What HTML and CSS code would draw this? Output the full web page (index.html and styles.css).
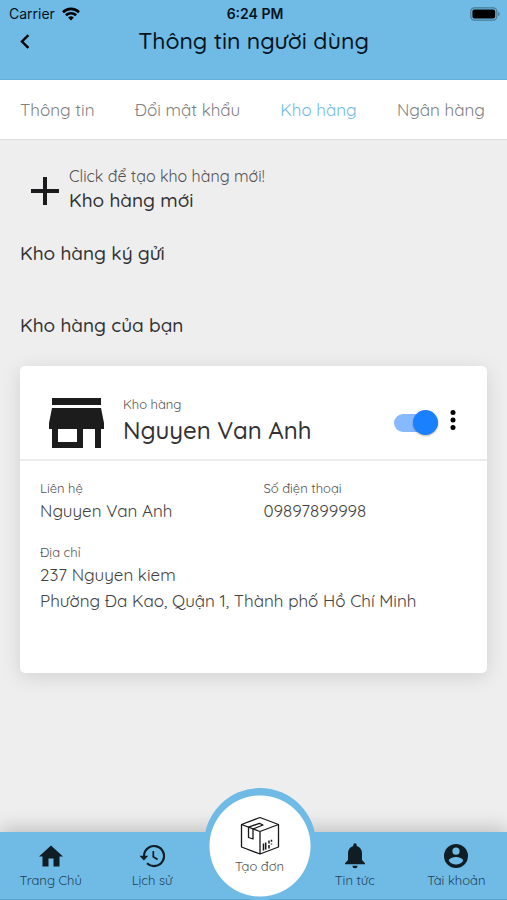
FILE: index.html
```html
<!DOCTYPE html>
<html lang="vi">
<head>
<meta charset="utf-8">
<meta name="viewport" content="width=device-width, initial-scale=1">
<title>Thông tin người dùng</title>
<link rel="stylesheet" href="styles.css">
</head>
<body>
<header class="header">
  <div class="status">
    <div class="status-carrier">
      <span>Carrier</span>
      <svg width="18" height="14" viewBox="0 0 18 14" aria-hidden="true"><g fill="none" stroke="#000" stroke-width="2.6"><path d="M1 5.2a11.4 11.4 0 0 1 16 0"/><path d="M3.9 8.3a7.3 7.3 0 0 1 10.2 0"/></g><path d="M6.1 10.6a4.2 4.2 0 0 1 5.8 0L9 13.6z"/></svg>
    </div>
    <div class="status-time">6:24 PM</div>
    <svg class="battery" width="31" height="14" viewBox="0 0 31 14" aria-hidden="true"><rect x=".8" y=".8" width="26" height="12.4" rx="3.6" fill="none" stroke="#477a96" stroke-width="1.2"/><rect x="2.4" y="2.4" width="22.8" height="9.2" rx="2"/><path d="M28.2 4.8c2 .8 2 3.6 0 4.4z" fill="#477a96"/></svg>
  </div>
  <div class="title-bar">
    <button class="back" type="button" aria-label="Quay lại"><svg width="10" height="15" viewBox="0 0 10 15"><path d="M8.4 1.2 2 7.5l6.4 6.3" fill="none" stroke="#000" stroke-width="2.4"/></svg></button>
    <h1>Thông tin người dùng</h1>
  </div>
</header>
<nav class="tabs">
  <a href="#info">Thông tin</a>
  <a href="#password">Đổi mật khẩu</a>
  <a class="active" href="#stores" aria-current="page">Kho hàng</a>
  <a href="#bank">Ngân hàng</a>
</nav>
<main class="content">
  <button class="create" type="button">
    <svg class="plus" width="30" height="30" viewBox="0 0 30 30" aria-hidden="true"><path d="M15 1v28M1 15h28" fill="none" stroke="#1b1b1d" stroke-width="4"/></svg>
    <span class="create-text">
      <span class="hint">Click để tạo kho hàng mới!</span>
      <span class="create-name">Kho hàng mới</span>
    </span>
  </button>
  <h2>Kho hàng ký gửi</h2>
  <h2>Kho hàng của bạn</h2>
  <article class="card">
    <div class="card-head">
      <svg class="store" width="56" height="50" viewBox="0 0 56 50" aria-hidden="true"><path fill="#1c1c1c" d="M3 0h49v7H3zM3 10h49l3 15v6h-3v19h-6V31H34v19H3V31H0v-6zM9 31v13h19V31z" fill-rule="evenodd"/></svg>
      <div class="card-title">
        <span class="label">Kho hàng</span>
        <h3>Nguyen Van Anh</h3>
      </div>
      <input class="switch" type="checkbox" role="switch" aria-label="Kích hoạt kho hàng" checked>
      <button class="more" type="button" aria-label="Tùy chọn"><svg width="6" height="22" viewBox="0 0 6 22"><circle cx="3" cy="3.500" r="2.500"/><circle cx="3" cy="11" r="2.500"/><circle cx="3" cy="18.500" r="2.500"/></svg></button>
    </div>
    <dl class="details">
      <div>
        <dt>Liên hệ</dt>
        <dd>Nguyen Van Anh</dd>
      </div>
      <div>
        <dt>Số điện thoại</dt>
        <dd>09897899998</dd>
      </div>
      <div class="wide">
        <dt>Địa chỉ</dt>
        <dd>237 Nguyen kiem</dd>
        <dd>Phường Đa Kao, Quận 1, Thành phố Hồ Chí Minh</dd>
      </div>
    </dl>
  </article>
</main>
<nav class="bottom">
  <a href="#home"><svg width="26" height="24" viewBox="0 0 26 24"><path fill="#101d24" d="M10.500 22.500v-8h5v8h6V12.500H25L13 1.500 1 12.500h3.500v10z"/></svg>Trang Chủ</a>
  <a href="#history"><svg width="26" height="24" viewBox="0 0 26 24"><path d="M5 12.500V12A10 10 0 1 1 8 19.200" fill="none" stroke="#101d24" stroke-width="2.200"/><path d="M.5 11.800h8.800l-4.400 4.700z" fill="#101d24"/><path d="M14.300 7v5.800l4.300 2.600" fill="none" stroke="#101d24" stroke-width="1.700"/></svg>Lịch sử</a>
  <a class="order" href="#create"><svg width="40" height="40" viewBox="0 0 40 40"><g fill="none" stroke="#171717" stroke-width="1.300" stroke-linejoin="round"><path d="M1.500 8.500 20 1.500l18.500 7V31L20 38 1.500 31zM1.500 8.500 20 15.500l18.500-7M20 15.500V38"/><path d="M8.500 11.200 19.500 7.300l3.500 1.700-10 4v10l-4.500-1.500z"/></g><path d="M23.500 27.500v7M25.700 26.500v7M29 24.500v3M29 29v3.500M31.500 23.800v2M31.500 27.500v1" stroke="#171717" stroke-width="1.500"/></svg>Tạo đơn</a>
  <a href="#news"><svg width="24" height="26" viewBox="0 0 24 26"><path fill="#101d24" d="M10.300 3V2a1.700 1.700 0 0 1 3.400 0v1c3.500.9 5.300 3.700 5.300 7.300V17l3 3.300v1H2v-1L5 17v-6.700C5 6.700 6.800 3.900 10.300 3zM9.500 22.700h5a2.500 2.500 0 0 1-5 0z"/></svg>Tin tức</a>
  <a href="#account"><svg width="24" height="24" viewBox="0 0 24 24"><path fill="#101d24" fill-rule="evenodd" d="M12 0a12 12 0 1 0 0 24 12 12 0 0 0 0-24zm0 3.600a3.600 3.600 0 1 1 0 7.200 3.600 3.600 0 0 1 0-7.200zm0 17a8.600 8.600 0 0 1-7.200-3.800c.1-2.400 4.800-3.700 7.200-3.700s7.100 1.300 7.200 3.700A8.600 8.600 0 0 1 12 20.600z"/></svg>Tài khoản</a>
</nav>
</body>
</html>
```
FILE: styles.css
```css
* { box-sizing: border-box; }

body {
  margin: 0;
  min-height: 100vh;
  display: flex;
  flex-direction: column;
  background: #eeeeee;
  color: #323234;
  font-family: Quicksand, Lato, sans-serif;
  font-size: 17px;
  line-height: 24px;
}

button {
  padding: 0;
  border: 0;
  background: none;
  color: inherit;
  font: inherit;
  text-align: left;
}

a { color: inherit; text-decoration: none; }
h1, h2, h3, dl, dd { margin: 0; font-weight: 400; }
svg { display: block; flex: none; }

.header {
  height: 80px;
  background: #6fbbe6;
  border-bottom: 1px solid #63afda;
  color: #06131b;
}

.status {
  display: grid;
  grid-template-columns: 1fr auto 1fr;
  align-items: center;
  height: 27px;
  padding: 0 6px 0 9px;
  font-family: Inter, sans-serif;
  font-size: 14px;
  line-height: 27px;
}

.status-carrier { display: flex; align-items: center; gap: 7px; }
.status-time { font-weight: 600; }
.battery { justify-self: end; }

.title-bar {
  display: grid;
  grid-template-columns: 40px 1fr 40px;
  align-items: center;
  height: 28px;
}

.back { padding-left: 20px; }

h1 {
  font-size: 23px;
  font-weight: 500;
  line-height: 28px;
  text-align: center;
}

.tabs {
  display: flex;
  justify-content: space-between;
  padding: 0 22px 0 20px;
  background: #fff;
  border-bottom: 1px solid #dedede;
  color: #808080;
  line-height: 59px;
}

.tabs .active { color: #70bbe8; }

.content { flex: 1; padding: 24px 20px; }

.create {
  display: flex;
  align-items: center;
  gap: 9px;
  padding-left: 10px;
}

.plus { margin-top: 6px; }
.create-text { display: grid; }
.hint { color: #525254; font-size: 16px; }
.create-name { font-size: 19px; font-weight: 500; }

h2 {
  margin: 29px 0 48px;
  font-size: 19px;
  font-weight: 500;
  line-height: 24px;
}

.card {
  margin-top: -19px;
  min-height: 307px;
  border-radius: 5px;
  background: #fff;
  box-shadow: 0 4px 20px rgba(0, 0, 0, 0.12);
}

.card-head {
  display: flex;
  align-items: center;
  height: 95px;
  padding: 20px 31px 0 29px;
  border-bottom: 2px solid #ebebeb;
}

.card-title { flex: 1; padding: 0 0 6px 18px; }
.more { padding-bottom: 6px; }

.label, dt {
  display: block;
  color: #525254;
  font-size: 13px;
  line-height: 20px;
}

h3 {
  font-size: 24px;
  font-weight: 500;
  line-height: 32px;
}

.switch {
  appearance: none;
  display: flex;
  align-items: center;
  justify-content: flex-end;
  width: 44px;
  height: 18px;
  margin: 0 12px 0 0;
  border-radius: 9px;
  background: #86b9ff;
}

.switch::before {
  content: "";
  width: 25px;
  height: 25px;
  flex: none;
  border-radius: 50%;
  background: #1b80fe;
  box-shadow: 0 1px 2px rgba(0, 0, 0, 0.3);
}

.switch:not(:checked) { justify-content: flex-start; }

.details {
  display: grid;
  grid-template-columns: 1fr 1fr;
  gap: 18px 20px;
  padding: 17px 20px;
  color: #424244;
}

.details dd { line-height: 26px; }
.wide { grid-column: 1 / -1; }

.bottom {
  position: sticky;
  bottom: 0;
  display: grid;
  grid-template-columns: repeat(5, 1fr);
  height: 68px;
  background: #6fbbe6;
  border-bottom: 1px solid #5ba6d0;
  box-shadow: 0 -4px 18px rgba(0, 0, 0, 0.2);
  color: #1f4257;
  font-size: 13px;
  line-height: 20px;
}

.bottom a {
  display: grid;
  grid-template-rows: 26px 20px;
  row-gap: 1px;
  align-items: center;
  justify-items: center;
  align-content: start;
  padding-top: 11px;
}

.bottom .order {
  position: absolute;
  bottom: -1px;
  left: calc(50% + 6px);
  grid-template-rows: 40px 20px;
  row-gap: 0;
  width: 112px;
  height: 112px;
  margin-left: -56px;
  padding-top: 28px;
  border-radius: 50%;
  background: radial-gradient(circle at 56px 58px, #fff 50px, #6fbbe6 51px);
  color: #505050;
}

.bottom a:nth-child(4) { grid-column: 4; }
```
